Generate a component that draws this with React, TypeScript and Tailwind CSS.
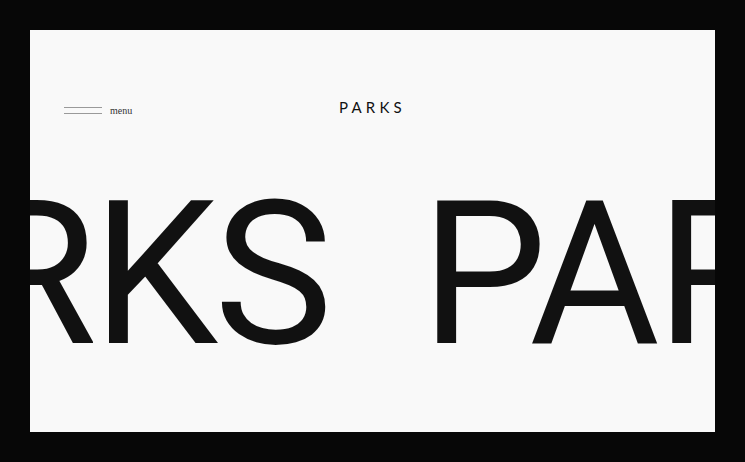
export default function App() {
  const words = ["PARKS", "PARKS", "PARKS"];
  return (
    <div className="min-h-screen bg-[#070707] p-[30px]">
      <div className="flex h-[402px] flex-col overflow-hidden bg-[#f9f9f9]">
        <header className="relative mt-[60px] flex h-10 items-center px-[34px]">
          <button className="flex items-center gap-2">
            <span className="flex w-[38px] flex-col gap-[5px]">
              <span className="block h-px bg-[#9a9a9a]" />
              <span className="block h-px bg-[#9a9a9a]" />
            </span>
            <span
              className="text-[10px] text-[#333]"
              style={{ fontFamily: '"Liberation Serif", serif' }}
            >
              menu
            </span>
          </button>
          <div
            className="absolute left-1/2 top-[10px] -translate-x-1/2 text-[15px] leading-none tracking-[0.28em] text-[#111]"
            style={{ fontFamily: 'Lato, sans-serif' }}
          >
            PARKS
          </div>
        </header>

        <div
          className="-ml-[292px] mt-[45px] flex gap-[92px] whitespace-nowrap text-[200px] leading-none tracking-[-4px] text-[#111]"
          style={{ fontFamily: 'Roboto, sans-serif' }}
        >
          {words.map((w, i) => (
            <span key={i}>{w}</span>
          ))}
        </div>
      </div>
    </div>
  );
}
